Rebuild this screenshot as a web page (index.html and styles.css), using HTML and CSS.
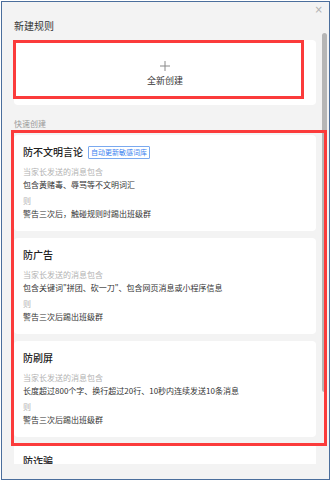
FILE: index.html
```html
<!DOCTYPE html>
<html lang="zh-CN">
<head>
<meta charset="utf-8">
<link rel="stylesheet" href="styles.css">
</head>
<body>
<div class="frame">
  <div class="header">
    <span class="title">新建规则</span>
    <span class="close">×</span>
  </div>
  <div class="scroll">
    <div class="new-card">
      <svg class="plus" width="10" height="10" viewBox="0 0 10 10"><path d="M5 0V10M0 5H10" stroke="#8a8a8a" stroke-width="1"/></svg>
      <div class="new-label">全新创建</div>
    </div>
    <div class="section-label">快速创建</div>
    <div class="rule-list">
      <div class="rule-card">
        <div class="rule-title">防不文明言论<span class="badge">自动更新敏感词库</span></div>
        <div class="rule-label first">当家长发送的消息包含</div>
        <div class="rule-text">包含黄赌毒、辱骂等不文明词汇</div>
        <div class="rule-label">则</div>
        <div class="rule-text">警告三次后，触碰规则时踢出班级群</div>
      </div>
      <div class="rule-card">
        <div class="rule-title">防广告</div>
        <div class="rule-label first">当家长发送的消息包含</div>
        <div class="rule-text">包含关键词"拼团、砍一刀"、包含网页消息或小程序信息</div>
        <div class="rule-label">则</div>
        <div class="rule-text">警告三次后踢出班级群</div>
      </div>
      <div class="rule-card">
        <div class="rule-title">防刷屏</div>
        <div class="rule-label first">当家长发送的消息包含</div>
        <div class="rule-text">长度超过800个字、换行超过20行、10秒内连续发送10条消息</div>
        <div class="rule-label">则</div>
        <div class="rule-text">警告三次后踢出班级群</div>
      </div>
      <div class="rule-card">
        <div class="rule-title">防诈骗</div>
      </div>
    </div>
  </div>
  <div class="scrollbar"></div>
  <div class="mark mark-new"></div>
  <div class="mark mark-list"></div>
</div>
</body>
</html>
```

FILE: styles.css
```css
html, body {
  margin: 0;
  padding: 0;
  background: #ffffff;
}

body {
  font-family: "Noto Sans CJK SC", "Noto Sans", sans-serif;
  color: #333333;
}

.frame {
  position: relative;
  box-sizing: border-box;
  margin: 1px 0 0 1px;
  width: 329px;
  height: 479px;
  border: 1px solid #4b6e9c;
  background: #f3f3f3;
  display: flex;
  flex-direction: column;
}

.header {
  height: 30px;
  box-sizing: border-box;
  padding: 17px 0 0 12px;
}

.title {
  display: block;
  font-size: 10px;
  line-height: 13px;
  color: #333333;
}

.close {
  position: absolute;
  top: 3px;
  right: 6px;
  font-family: "DejaVu Sans", sans-serif;
  font-size: 10px;
  line-height: 10px;
  color: #b0b0b0;
}

.scroll {
  height: 432px;
  overflow: hidden;
  box-sizing: border-box;
  padding: 8px 13px 0 12px;
}

.new-card {
  height: 65px;
  box-sizing: border-box;
  background: #ffffff;
  border-radius: 4px;
  display: flex;
  flex-direction: column;
  align-items: center;
  padding-top: 21px;
}

.plus {
  display: block;
}

.new-label {
  margin-top: 4px;
  font-size: 9px;
  line-height: 12px;
  color: #333333;
}

.section-label {
  margin: 13px 0 5px 0;
  font-size: 8px;
  line-height: 12px;
  color: #9a9a9a;
}

.rule-list {
  display: flex;
  flex-direction: column;
  gap: 7px;
}

.rule-card {
  height: 96px;
  flex-shrink: 0;
  box-sizing: border-box;
  background: #ffffff;
  border-radius: 4px;
  padding: 9px 9px 0 9px;
}

.rule-title {
  display: flex;
  align-items: center;
  font-size: 10px;
  font-weight: 500;
  line-height: 16px;
  color: #222222;
}

.badge {
  margin-left: 5px;
  border: 1px solid #7aa9ef;
  border-radius: 1px;
  padding: 0 2px;
  font-size: 7px;
  font-weight: 400;
  line-height: 11px;
  color: #3b82f0;
}

.rule-label {
  margin-top: 3px;
  font-size: 8px;
  line-height: 13px;
  color: #b2b2b2;
}

.rule-label.first {
  margin-top: 5px;
}

.rule-text {
  font-size: 8px;
  line-height: 13px;
  color: #333333;
  white-space: nowrap;
}

.scrollbar {
  position: absolute;
  left: 320px;
  top: 31px;
  width: 5px;
  height: 359px;
  border-radius: 3px;
  background: #b6b6b6;
}

.mark {
  position: absolute;
  box-sizing: border-box;
  border: 3px solid #fb3b3b;
}

.mark-new {
  left: 11px;
  top: 38px;
  width: 291px;
  height: 59px;
}

.mark-list {
  left: 9px;
  top: 128px;
  width: 316px;
  height: 316px;
}
```
